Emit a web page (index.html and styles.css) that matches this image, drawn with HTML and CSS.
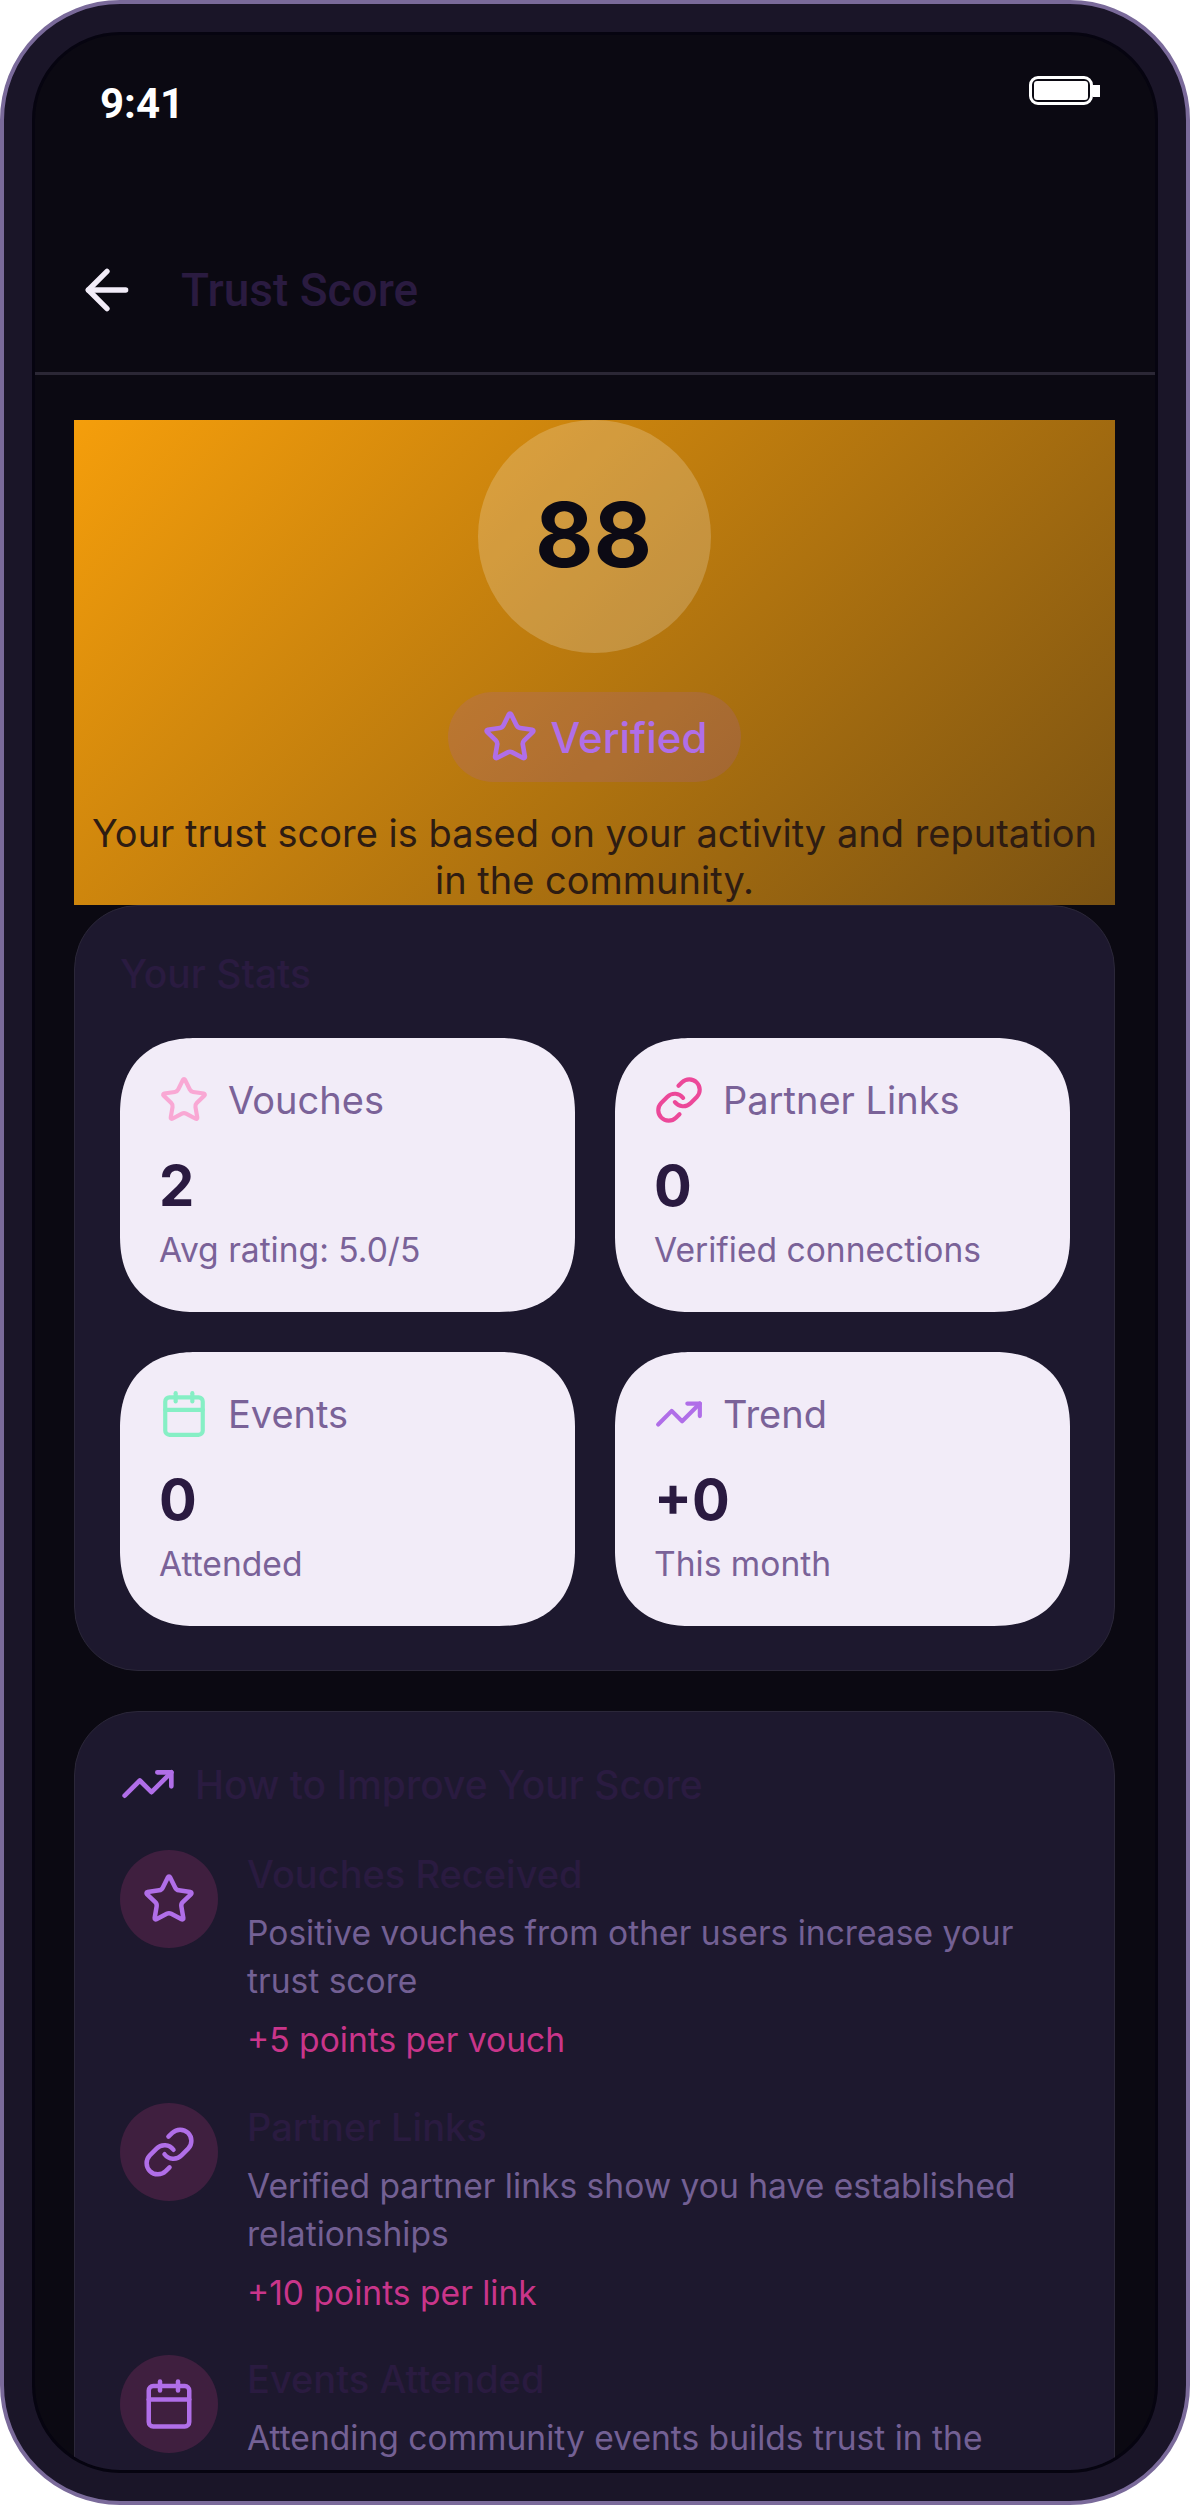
FILE: index.html
```html
<!DOCTYPE html>
<html lang="en">
<head>
  <meta charset="UTF-8" />
  <meta name="viewport" content="width=device-width, initial-scale=1.0" />
  <title>Trust Score</title>
  <link rel="stylesheet" href="styles.css">
</head>
<body>
  <!-- Icon sprite -->
  <svg class="sprite" xmlns="http://www.w3.org/2000/svg">
    <symbol id="i-star" viewBox="0 0 24 24"><path d="M11.525 2.295a.53.53 0 0 1 .95 0l2.31 4.679a2.123 2.123 0 0 0 1.595 1.16l5.166.756a.53.53 0 0 1 .294.904l-3.736 3.638a2.123 2.123 0 0 0-.611 1.878l.882 5.14a.53.53 0 0 1-.771.56l-4.618-2.428a2.122 2.122 0 0 0-1.973 0L6.396 21.01a.53.53 0 0 1-.77-.56l.881-5.139a2.122 2.122 0 0 0-.611-1.879L2.16 9.795a.53.53 0 0 1 .294-.906l5.165-.755a2.122 2.122 0 0 0 1.597-1.16z"/></symbol>
    <symbol id="i-link" viewBox="0 0 24 24"><path d="M10 13a5 5 0 0 0 7.54.54l3-3a5 5 0 0 0-7.07-7.07l-1.72 1.71"/><path d="M14 11a5 5 0 0 0-7.54-.54l-3 3a5 5 0 0 0 7.07 7.07l1.71-1.71"/></symbol>
    <symbol id="i-calendar" viewBox="0 0 24 24"><path d="M8 2v4"/><path d="M16 2v4"/><rect x="3" y="4" width="18" height="18" rx="2"/><path d="M3 10h18"/></symbol>
    <symbol id="i-trend" viewBox="0 0 24 24"><path d="M22 7l-8.5 8.5-5-5L2 17"/><path d="M16 7h6v6"/></symbol>
    <symbol id="i-back" viewBox="0 0 24 24"><path d="M12 19l-7-7 7-7"/><path d="M19 12H5"/></symbol>
  </svg>

  <div class="phone">
    <div class="screen">
      <div class="status-bar">
        <span class="clock">9:41</span>
        <div class="battery"><div class="battery-body"><div class="battery-fill"></div></div><div class="battery-tip"></div></div>
      </div>

      <div class="top-bar">
        <svg class="icon back-icon"><use href="#i-back"/></svg>
        <h1>Trust Score</h1>
      </div>

      <div class="content">
        <!-- Score hero -->
        <div class="hero">
          <div class="score-circle">88</div>
          <div class="verified-pill">
            <svg class="icon pill-icon"><use href="#i-star"/></svg>
            <span>Verified</span>
          </div>
          <p class="hero-text">Your trust score is based on your activity and reputation in the community.</p>
        </div>

        <!-- Stats -->
        <div class="card stats-card">
          <h2 class="stats-title">Your Stats</h2>
          <div class="stats-grid">
            <div class="stat">
              <div class="stat-head"><svg class="icon stat-icon star-pink"><use href="#i-star"/></svg><span>Vouches</span></div>
              <div class="stat-value">2</div>
              <div class="stat-sub">Avg rating: 5.0/5</div>
            </div>
            <div class="stat">
              <div class="stat-head"><svg class="icon stat-icon link-pink"><use href="#i-link"/></svg><span>Partner Links</span></div>
              <div class="stat-value">0</div>
              <div class="stat-sub">Verified connections</div>
            </div>
            <div class="stat">
              <div class="stat-head"><svg class="icon stat-icon cal-green"><use href="#i-calendar"/></svg><span>Events</span></div>
              <div class="stat-value">0</div>
              <div class="stat-sub">Attended</div>
            </div>
            <div class="stat">
              <div class="stat-head"><svg class="icon stat-icon trend-purple"><use href="#i-trend"/></svg><span>Trend</span></div>
              <div class="stat-value">+0</div>
              <div class="stat-sub">This month</div>
            </div>
          </div>
        </div>

        <!-- Tips -->
        <div class="card">
          <div class="tips-head">
            <svg class="icon tips-icon"><use href="#i-trend"/></svg>
            <h2>How to Improve Your Score</h2>
          </div>
          <div class="tip">
            <div class="tip-circle"><svg class="icon"><use href="#i-star"/></svg></div>
            <div class="tip-body">
              <h3>Vouches Received</h3>
              <p>Positive vouches from other users increase your trust score</p>
              <div class="tip-points">+5 points per vouch</div>
            </div>
          </div>
          <div class="tip">
            <div class="tip-circle"><svg class="icon"><use href="#i-link"/></svg></div>
            <div class="tip-body">
              <h3>Partner Links</h3>
              <p>Verified partner links show you have established relationships</p>
              <div class="tip-points">+10 points per link</div>
            </div>
          </div>
          <div class="tip">
            <div class="tip-circle"><svg class="icon"><use href="#i-calendar"/></svg></div>
            <div class="tip-body">
              <h3>Events Attended</h3>
              <p>Attending community events builds trust in the</p>
            </div>
          </div>
        </div>
      </div>
    </div>
  </div>
</body>
</html>
```

FILE: styles.css
```css
* {
  box-sizing: border-box;
}
html, body {
  margin: 0;
  background: #fff;
}
body {
  font-family: 'Inter', sans-serif;
}
h1, h2, h3, p {
  margin: 0;
}
.sprite {
  display: none;
}
.icon {
  fill: none;
  stroke: currentColor;
  stroke-width: 2;
  stroke-linecap: round;
  stroke-linejoin: round;
  flex-shrink: 0;
}
/* Device frame */
.phone {
  width: 1190px;
  height: 2505px;
  padding: 28px;
  background: #1a1528;
  border: 4px solid #7a6a9a;
  border-radius: 120px;
  overflow: hidden;
}
.screen {
  height: 100%;
  background: #0b0912;
  border: 3px solid #060410;
  border-radius: 88px;
  overflow: hidden;
}
.status-bar {
  height: 173px;
  padding: 44px 55px 0 65px;
  display: flex;
  justify-content: space-between;
  align-items: flex-start;
  color: #fff;
}
.clock {
  font-family: 'Roboto', sans-serif;
  font-weight: 700;
  font-size: 42px;
  line-height: 50px;
}
.battery {
  display: flex;
  align-items: center;
  margin-top: -3px;
}
.battery-body {
  width: 64px;
  height: 29px;
  padding: 2px;
  border: 3px solid #fff;
  border-radius: 9px;
}
.battery-fill {
  height: 100%;
  background: #fff;
  border-radius: 3px;
}
.battery-tip {
  width: 7px;
  height: 12px;
  background: #fff;
}
.top-bar {
  height: 167px;
  padding: 0 40px;
  display: flex;
  align-items: center;
  gap: 42px;
  border-bottom: 3px solid #2b2735;
}
.top-bar h1 {
  font-family: 'Roboto', sans-serif;
  font-size: 46px;
  font-weight: 500;
  color: #2a1b40;
}
.back-icon {
  width: 64px;
  height: 64px;
  color: #f2ecf8;
}
.content {
  padding: 45px 40px 0 39px;
}
/* Hero */
.hero {
  height: 485px;
  display: flex;
  flex-direction: column;
  align-items: center;
  background: linear-gradient(135deg, #f59e0b, #7a5212);
}
.score-circle {
  width: 233px;
  height: 233px;
  padding: 0 2px 4px 0;
  display: flex;
  align-items: center;
  justify-content: center;
  border-radius: 50%;
  background: rgba(255, 255, 255, 0.2);
  color: #0c0a14;
  font-size: 90px;
  font-weight: 700;
}
.verified-pill {
  height: 90px;
  margin-top: 39px;
  padding: 0 33.5px;
  display: flex;
  align-items: center;
  gap: 13px;
  border-radius: 45px;
  background: rgba(168, 85, 247, 0.15);
  color: #b06ee8;
  font-size: 42px;
  font-weight: 500;
}
.pill-icon {
  width: 56px;
  height: 56px;
}
.hero-text {
  margin-top: 28px;
  font-size: 38px;
  line-height: 47px;
  text-align: center;
  color: #2e1c12;
}
/* Cards */
.card {
  margin-bottom: 40px;
  padding: 46px 44px 46px 45px;
  background: #1d182e;
  border: 1.5px solid #2b2739;
  border-radius: 64px;
}
.stats-card {
  padding-bottom: 44px;
}
.stats-title {
  font-size: 39px;
  line-height: 44px;
  font-weight: 500;
  color: #2a1b40;
  margin-bottom: 42px;
}
.stats-grid {
  display: grid;
  grid-template-columns: 1fr 1fr;
  gap: 40px;
}
.stat {
  height: 274px;
  padding: 37px 39px;
  background: #f2ecf8;
  border-radius: 76px;
  corner-shape: superellipse(1.2);
}
.stat-head {
  height: 50px;
  margin-bottom: 27px;
  display: flex;
  align-items: center;
  gap: 19px;
  font-size: 38px;
  color: #7a6298;
}
.stat-icon {
  width: 50px;
  height: 50px;
}
.star-pink { color: #f9a8d4; }
.link-pink { color: #ec4899; }
.cal-green { color: #86efc5; }
.trend-purple { color: #b06ee8; }
.stat-value {
  font-size: 56px;
  line-height: 68px;
  font-weight: 700;
  color: #2a1a40;
  margin-bottom: 9px;
}
.stat-sub {
  font-size: 33.6px;
  line-height: 42px;
  color: #7a6298;
}
/* Tips */
.tips-head {
  height: 54px;
  padding-bottom: 2px;
  margin-bottom: 38px;
  display: flex;
  align-items: center;
  gap: 19px;
}
.tips-head h2 {
  font-size: 39px;
  font-weight: 500;
  color: #2a1b40;
}
.tips-icon {
  width: 56px;
  height: 56px;
  color: #b06ee8;
}
.tip {
  display: flex;
  gap: 29px;
  margin-bottom: 41.5px;
}
.tip-circle {
  width: 98px;
  height: 98px;
  display: flex;
  align-items: center;
  justify-content: center;
  flex-shrink: 0;
  border-radius: 50%;
  background: #3f1f3f;
  color: #b06ee8;
}
.tip-circle .icon {
  width: 54px;
  height: 54px;
}
.tip-body {
  padding-top: 1px;
}
.tip-body h3 {
  font-size: 38px;
  line-height: 46px;
  font-weight: 500;
  color: #2a1b40;
  margin-bottom: 12px;
}
.tip-body p {
  font-size: 33.6px;
  line-height: 48px;
  color: #736094;
}
.tip-points {
  margin-top: 14px;
  font-size: 33.6px;
  line-height: 42px;
  color: #c9358a;
}
```
